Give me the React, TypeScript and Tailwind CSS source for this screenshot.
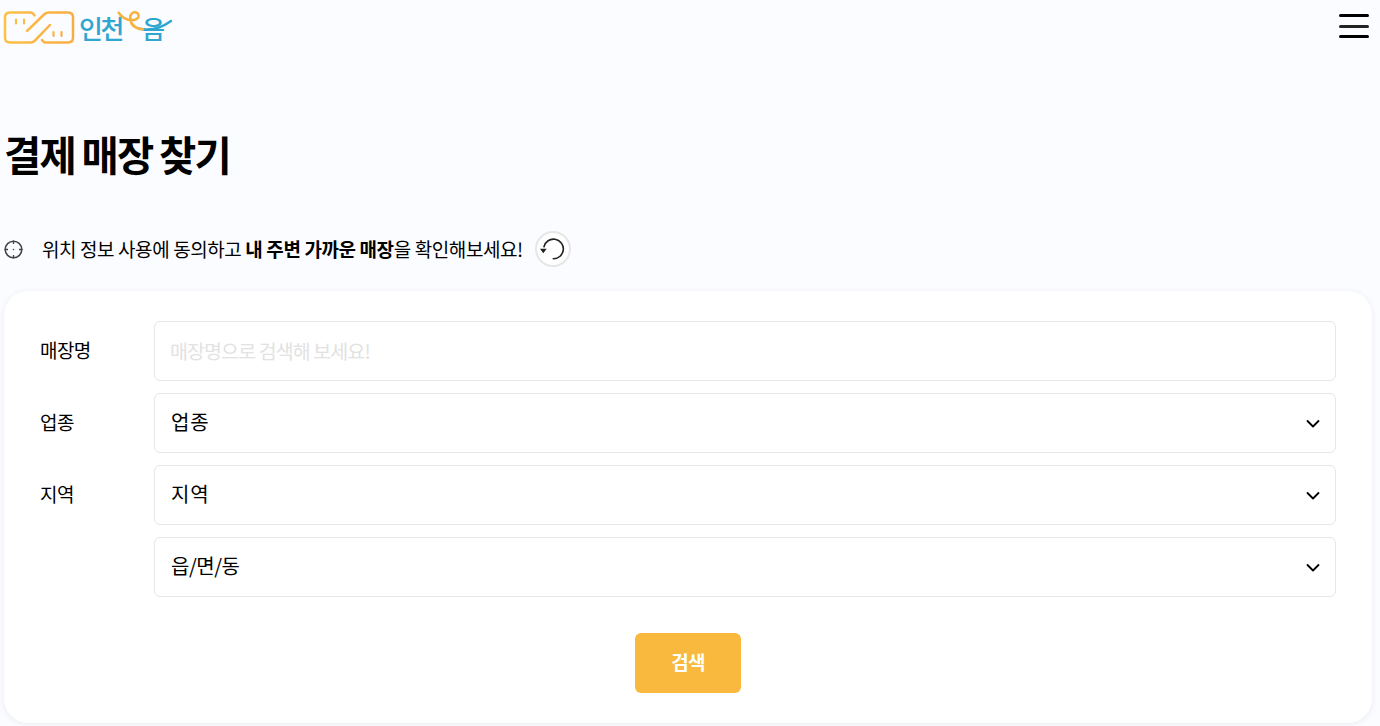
import React from "react";

function Logo() {
  return (
    <div className="relative h-[44px] w-[175px]">
      <svg width="76" height="44" viewBox="0 0 76 44" fill="none" className="absolute left-0 top-0">
        <defs>
          <linearGradient id="lg" x1="0" y1="0" x2="76" y2="0" gradientUnits="userSpaceOnUse">
            <stop offset="0" stopColor="#fdc247" />
            <stop offset="1" stopColor="#f9ab45" />
          </linearGradient>
        </defs>
        <path d="M34.500 9.500Q33 6.500 30 6.500H10Q5 6.500 5 11.500V31.500Q5 36.500 10 36.500H31Q33 36.500 35 34.500L50 19" stroke="url(#lg)" strokeWidth="2.500" strokeLinecap="round" strokeLinejoin="round" />
        <path d="M27 25L44 8.500Q46 6.500 49 6.500H68Q73 6.500 73 11.500V31.500Q73 36.500 68 36.500H46Q43.500 36.500 42 34" stroke="url(#lg)" strokeWidth="2.500" strokeLinecap="round" strokeLinejoin="round" />
        <path d="M16 13.500V17.500M24 13.500V17.500M53.500 26V30M61.500 26V30" stroke="url(#lg)" strokeWidth="2.200" strokeLinecap="round" />
      </svg>
      <span className="absolute left-[79px] top-[3px] text-[26px] leading-[38px] tracking-[-2.500px] text-[#2fa6cf] font-medium">인천</span>
      <span className="absolute left-[142px] top-[4px] text-[25px] leading-[36px] text-[#2fa6cf] font-medium">음</span>
      <svg width="60" height="30" viewBox="0 0 60 30" fill="none" className="absolute left-[115px] top-0">
        <path d="M24.300 22.700Q41 26 56 15" stroke="#2fa6cf" strokeWidth="2.500" strokeLinecap="round" />
        <path d="M3.700 6.700Q9.300 15 19.300 14Q26 11.700 22.700 7.300Q17.700 4 15.300 10Q14.300 20 24.300 22.700L28 23.300" stroke="#f9b13e" strokeWidth="2.500" strokeLinecap="round" />
      </svg>
    </div>
  );
}

function Chevron() {
  return (
    <svg width="14" height="9" viewBox="0 0 14 9" fill="none" className="absolute right-[16px] top-1/2 -translate-y-1/2 mt-[1px] pointer-events-none">
      <path d="M1.500 1.500L7 7L12.500 1.500" stroke="#000" strokeWidth="1.800" strokeLinecap="round" strokeLinejoin="round" />
    </svg>
  );
}

function SelectBox({ label, track }: { label: string; track: string }) {
  return (
    <div className="relative flex-1">
      <select defaultValue={label} className={"appearance-none w-full h-[60px] rounded-[6px] border border-[#e6e6e6] bg-white pl-[16px] pr-10 pb-[2px] text-[20px] text-black outline-none " + track}>
        <option>{label}</option>
      </select>
      <Chevron />
    </div>
  );
}

function Row({ label, children }: { label?: string; children: React.ReactNode }) {
  return (
    <div className="flex">
      <div className="w-[114px] shrink-0 pt-[15px] text-[19px] leading-[27px] tracking-[-0.600px] text-black">{label}</div>
      {children}
    </div>
  );
}

export default function App() {
  return (
    <div className="min-h-[726px] bg-[#fbfcff] text-black overflow-hidden" style={{ fontFamily: '"Noto Sans CJK KR", "Noto Sans", sans-serif' }}>
      <header className="flex h-[58px] items-start justify-between pt-[6px] pr-[11px]">
        <Logo />
        <button aria-label="메뉴" className="mt-[8px] flex w-[30px] flex-col gap-[7.500px]">
          <span className="block h-[3px] w-full rounded-full bg-black" />
          <span className="block h-[3px] w-full rounded-full bg-[#222]" />
          <span className="block h-[3px] w-full rounded-full bg-black" />
        </button>
      </header>

      <h1 className="mt-[63px] ml-[4px] text-[40.500px] leading-[66px] font-bold tracking-[-1.750px] [word-spacing:-1px]">결제 매장 찾기</h1>

      <div className="mt-[43px] flex h-[38px] items-center pl-[4px]">
        <svg width="19" height="19" viewBox="0 0 19 19" fill="none" className="shrink-0">
          <circle cx="9.500" cy="9.500" r="8.300" stroke="#444" strokeWidth="1.500" />
          <path d="M9.500 .5V4M9.500 15V18.500M.5 9.500H4M15 9.500H18.500" stroke="#444" strokeWidth="1.300" />
          <circle cx="9.500" cy="9.500" r=".8" fill="#444" />
        </svg>
        <p className="ml-[19px] text-[19px] tracking-[-0.400px]">
          위치 정보 사용에 동의하고 <b className="font-bold">내 주변 가까운 매장</b>을 확인해보세요!
        </p>
        <button aria-label="새로고침" className="ml-[12px] flex h-[36px] w-[36px] items-center justify-center rounded-full border-2 border-[#e6e6e6] bg-white">
          <svg width="26" height="26" viewBox="0 0 26 26" fill="none">
            <path d="M13.300 22.700A9.800 9.800 0 1 0 4 10.700" stroke="#222" strokeWidth="1.600" strokeLinecap="round" />
            <path d="M0 12.700H6.700L3.300 17.300Z" fill="#222" />
          </svg>
        </button>
      </div>

      <section className="ml-[4px] mr-[8px] mt-[23px] rounded-[24px] bg-white px-[36px] pt-[30px] pb-[30px] shadow-[0_1px_6px_rgba(0,0,0,0.07)]">
        <div className="flex flex-col gap-[12px]">
          <Row label="매장명">
            <input placeholder="매장명으로 검색해 보세요!" className="flex-1 h-[60px] rounded-[6px] border border-[#e6e6e6] bg-white px-[15px] pb-[2px] text-[19.500px] tracking-[-0.900px] outline-none placeholder:text-[#e2e2e2]" />
          </Row>
          <Row label="업종"><SelectBox label="업종" track="tracking-[0.800px]" /></Row>
          <Row label="지역"><SelectBox label="지역" track="tracking-[0.800px]" /></Row>
          <Row><SelectBox label="읍/면/동" track="tracking-[-0.500px]" /></Row>
        </div>
        <div className="mt-[36px] flex justify-center">
          <button className="h-[60px] w-[106px] rounded-[6px] bg-[#f9b93e] pb-[2px] text-[19px] font-bold tracking-[-0.700px] text-white">검색</button>
        </div>
      </section>
    </div>
  );
}
